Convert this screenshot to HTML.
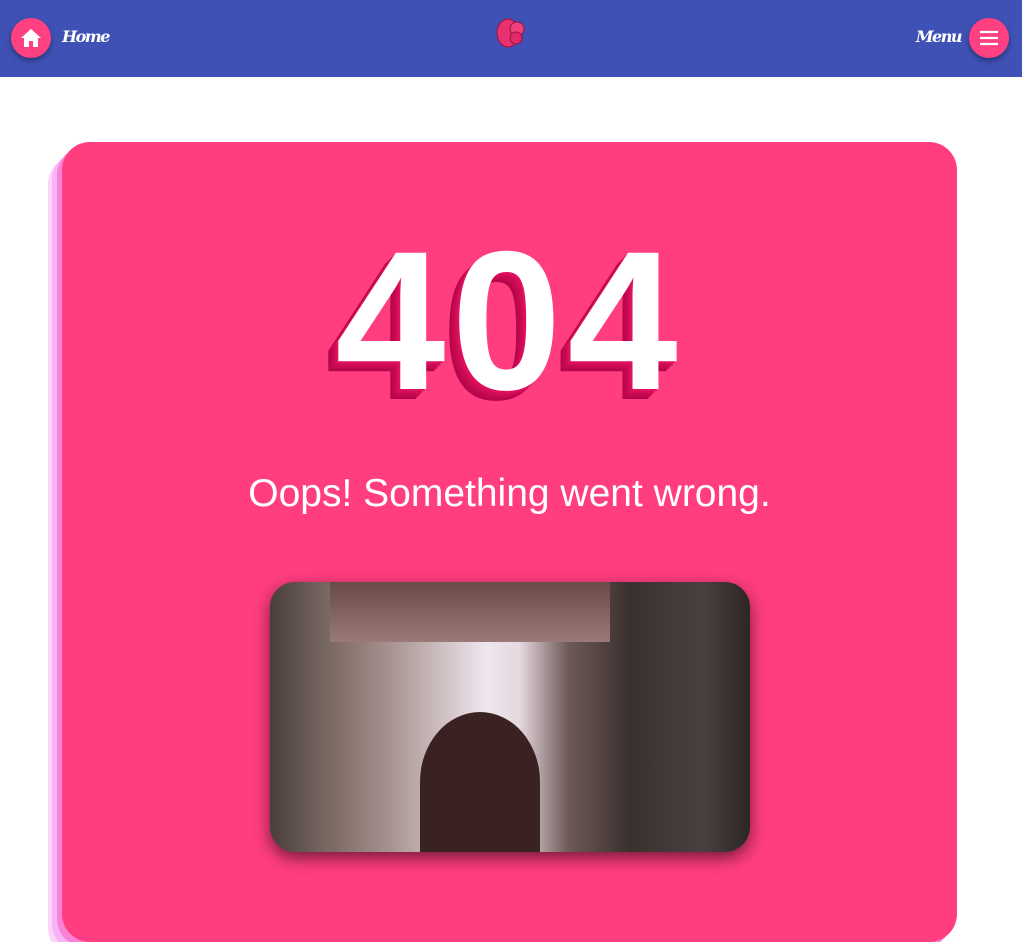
<!DOCTYPE html>
<html><head><style>
body{margin:0;width:1022px;height:881px;overflow:hidden;background:#fff;font-family:"Liberation Sans",sans-serif;position:relative}
.nav{position:absolute;left:0;top:0;width:1022px;height:77px;background:#3f51b5}
.btn{position:absolute;width:40px;height:40px;border-radius:50%;background:#ff4081;box-shadow:0 3px 6px rgba(0,0,0,.35)}
.script{position:absolute;color:#fff;font-family:"DejaVu Serif",serif;font-style:italic;font-weight:bold;font-size:16px;letter-spacing:-1.5px}
.card{position:absolute;left:62px;top:142px;width:895px;height:800px;background:#ff3d7f;border-radius:28px;box-shadow:-5px 5px 0 #f783d8,-10px 10px 0 #f8b5f5,-14px 14px 0 #fbd3fb}
.big{position:absolute;left:0;width:895px;top:74px;text-align:center;font-weight:bold;font-size:198px;line-height:210px;letter-spacing:6px;color:#fff;
text-shadow:-2px 2px 0 #e0115f,-4px 4px 0 #d40d58,-6px 6px 0 #c90a52,-8px 8px 0 #c0084e,-10px 10px 0 #b4064a}
.oops{position:absolute;left:0;width:895px;top:330px;text-align:center;color:#fff;font-size:39px}
.img{position:absolute;left:208px;top:440px;width:480px;height:270px;border-radius:25px;box-shadow:0 6px 16px rgba(0,0,0,.55);overflow:hidden;
background:linear-gradient(90deg,#5a4a48 0%,#7a6660 12%,#a89290 25%,#efe6ee 45%,#e5d8de 52%,#6e5a58 62%,#3a302e 75%,#4a4040 90%,#2c2624 100%)}
</style></head><body>
<div class="nav">
<div class="btn" style="left:11px;top:18px"><svg width="40" height="40" viewBox="0 0 40 40"><path d="M20 11 L30 20 H27 V29 H22 V23 H18 V29 H13 V20 H10 Z" fill="#fff"/></svg></div>
<div class="script" style="left:62px;top:27px">Home</div>
<svg style="position:absolute;left:495px;top:16px" width="32" height="34" viewBox="0 0 32 34"><ellipse cx="13" cy="17" rx="11" ry="14" fill="#e8316f" stroke="#9a1040"/><circle cx="22" cy="13" r="7" fill="#f0407c" stroke="#9a1040"/><circle cx="21" cy="22" r="6" fill="#e02a68" stroke="#9a1040"/></svg>
<div class="script" style="right:61px;top:27px">Menu</div>
<div class="btn" style="left:969px;top:18px"><svg width="40" height="40" viewBox="0 0 40 40"><path d="M11 14h18M11 20h18M11 26h18" stroke="#fff" stroke-width="2.2"/></svg></div>
</div>
<div class="card">
<div class="big">404</div>
<div class="oops">Oops! Something went wrong.</div>
<div class="img">
<div style="position:absolute;left:60px;top:0;width:280px;height:60px;background:linear-gradient(#6a4a48,#9a7a78)"></div>
<div style="position:absolute;left:150px;top:130px;width:120px;height:140px;border-radius:50% 50% 0 0;background:#3a2222"></div>
<div style="position:absolute;left:0;top:0;width:60px;height:270px;background:linear-gradient(90deg,#4a3e3a,#7a6a66)"></div>
</div>
</div>
</body></html>
